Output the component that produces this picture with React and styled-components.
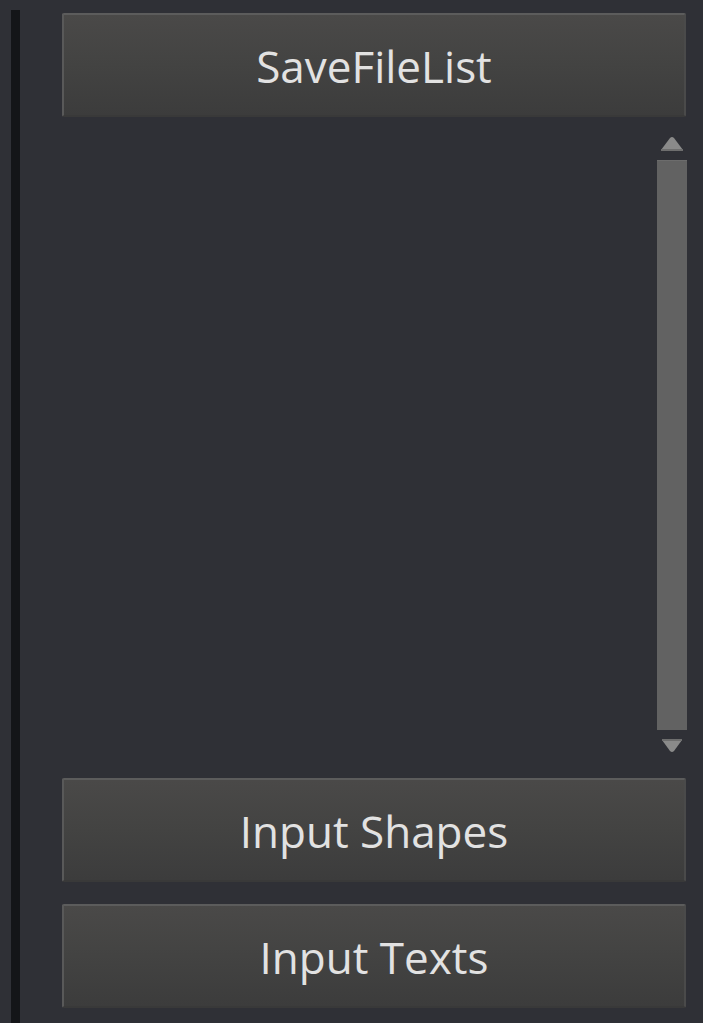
import styled, { createGlobalStyle } from "styled-components";

const GlobalStyle = createGlobalStyle`
    html, body {
        margin: 0;
        padding: 0;
        background: #2f3036;
        font-family: "Open Sans", "DejaVu Sans", sans-serif;
    }
`

const Page = styled.div`
    display: flex;
    width: 703px;
    height: 1023px;
    background: #2f3036;
    overflow: hidden;
`

const Divider = styled.div`
    width: 9px;
    margin: 10px 0 0 11px;
    background: #141518;
`

const Panel = styled.div`
    flex: 1;
    display: flex;
    flex-direction: column;
    padding: 13px 17px 15px 42px;
`

const Button = styled.div`
    height: 104px;
    flex-shrink: 0;
    box-sizing: border-box;
    display: flex;
    align-items: center;
    justify-content: center;
    margin-top: ${(p) => p.$gap || 0}px;
    border-top: 2px solid #5c5c5c;
    border-left: 2px solid #595959;
    border-right: 2px solid #4a4a4a;
    border-bottom: 2px solid #393939;
    border-radius: 2px;
    background: linear-gradient(180deg, #4a4948 0%, #434342 50%, #3c3c3c 100%);
    color: #e2e2e2;
    font-size: 44px;
    padding-top: 2px;
`

const ListArea = styled.div`
    flex: 1;
    display: flex;
    justify-content: flex-end;
    padding: 18px 0 23px;
    min-height: 0;
`

const ScrollBar = styled.div`
    width: 30px;
    display: flex;
    flex-direction: column;
    align-items: center;
    margin-right: -1px;
`

const Arrow = styled.svg`
    width: 28px;
    height: 18px;
    flex-shrink: 0;
`

const Track = styled.div`
    flex: 1;
    width: 30px;
    margin: 7px 0 7px;
    background: #626262;
    border-top: 1px solid #6c6c6c;
`

const App = () => {
    return (
        <Page>
            <GlobalStyle />
            <Divider />
            <Panel>
                <Button>SaveFileList</Button>
                <ListArea>
                    <ScrollBar>
                        <Arrow viewBox="0 0 28 18">
                            <path d="M3 15 L12 3 Q14 1 16 3 L25 15 Z" fill="#8a8a8a" />
                            <rect x="3" y="14" width="22" height="2" fill="#6e6e6e" />
                        </Arrow>
                        <Track />
                        <Arrow viewBox="0 0 28 18">
                            <path d="M4 3 L24 3 L16 14 Q14 16 12 14 Z" fill="#8a8a8a" />
                            <rect x="4" y="2" width="20" height="2" fill="#6e6e6e" />
                        </Arrow>
                    </ScrollBar>
                </ListArea>
                <Button>Input Shapes</Button>
                <Button $gap={22}>Input Texts</Button>
            </Panel>
        </Page>
    )
}

export default App
